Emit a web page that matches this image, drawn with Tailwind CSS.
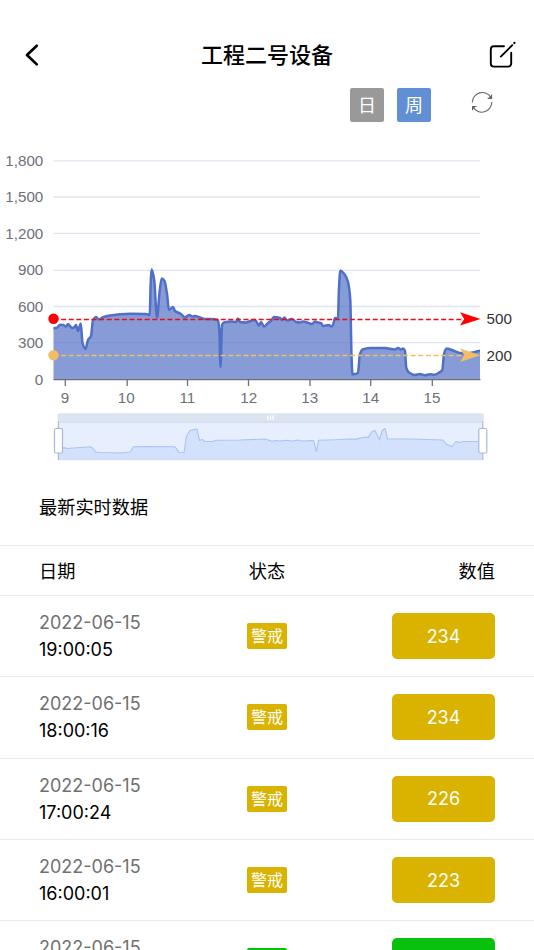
<!DOCTYPE html>
<html lang="zh-CN">
<head>
  <meta charset="UTF-8" />
  <meta name="viewport" content="width=device-width, initial-scale=1.0" />
  <title>工程二号设备</title>
  <script src="https://cdn.jsdelivr.net/npm/@tailwindcss/browser@4"></script>
</head>
<body class="h-[950px] overflow-hidden bg-white text-black font-[Inter,'Noto_Sans_CJK_SC',sans-serif]">
  <header class="flex h-[88px] items-center justify-between pt-[22px] pr-[17px] pl-[17px]">
    <svg class="h-7 w-7" viewBox="17 41 28 28" fill="none" stroke="#000" stroke-width="2.7" stroke-linecap="round" stroke-linejoin="round">
      <path d="M36.8 45.8 27 55l9.8 9.4" />
    </svg>
    <h1 class="text-[22px] leading-[32px] font-medium">工程二号设备</h1>
    <svg class="h-7 w-7" viewBox="489 41 28 28" fill="none" stroke="#000" stroke-width="1.9" stroke-linecap="round">
      <path d="M504 46.2h-10.200a3 3 0 0 0-3 3v14.400a3 3 0 0 0 3 3h14.400a3 3 0 0 0 3-3v-10.800" />
      <path d="M500.800 56.600 512.300 45.200" />
      <path d="M514.300 43l.2-.2" stroke-width="2.200" />
    </svg>
  </header>

  <div class="flex h-[52px] items-start justify-end pr-[41px] text-[18px] text-white">
    <button class="flex h-[34px] w-[34px] items-center justify-center rounded-[2px] bg-[#999]">日</button>
    <button class="ml-[13px] flex h-[34px] w-[34px] items-center justify-center rounded-[2px] bg-[#618fd6]">周</button>
    <svg class="mt-[2px] ml-[40px] h-[24px] w-[22px]" viewBox="471 90 22 24" fill="none" stroke="#666" stroke-width="1.100">
      <path d="M472.300 102.600a10 10 0 0 1 18.600-5.200M491.800 102.100a10 10 0 0 1-18.600 5.200" />
      <path d="M491.500 94.600v3.700h-3.900M472.600 110.300v-3.800h3.800" />
      <path d="M491.500 96v2.300h-2.400zM472.600 108.800v-2.300h2.400z" fill="#666" />
    </svg>
  </div>

  <svg class="block h-[330px] w-full" viewBox="0 140 534 330" font-family="Liberation Sans, sans-serif" font-size="15.2">
    <!-- grid -->
    <path d="M53.500 160.800H480M53.500 197H480M53.500 233.300H480M53.500 270.300H480M53.500 306.500H480M53.500 342.700H480" stroke="#e0e6f1" stroke-width="1.300" />
    <g fill="#6e7079" text-anchor="end">
      <text x="43.300" y="166">1,800</text>
      <text x="43.300" y="202.400">1,500</text>
      <text x="43.300" y="238.800">1,200</text>
      <text x="43.300" y="275.400">900</text>
      <text x="43.300" y="311.900">600</text>
      <text x="43.300" y="348.400">300</text>
      <text x="43.300" y="384.900">0</text>
    </g>

    <path id="area" fill="#5470c6" fill-opacity=".7" />
    <path d="M53.500 379.700H480.500M65.300 380v6M127.200 380v6M187.500 380v6M248.500 380v6M310 380v6M370.700 380v6M432.300 380v6" fill="none" stroke="#6e7079" stroke-width="1.300" />
    <path id="line" fill="none" stroke="#5070c8" stroke-width="2.500" stroke-linejoin="round" />
    <g fill="#6e7079" text-anchor="middle">
      <text x="65" y="403">9</text>
      <text x="126.200" y="403">10</text>
      <text x="187.300" y="403">11</text>
      <text x="248.800" y="403">12</text>
      <text x="309.700" y="403">13</text>
      <text x="370.800" y="403">14</text>
      <text x="432" y="403">15</text>
    </g>

    <!-- alarm thresholds -->
    <path d="M53.500 319.500H462" stroke="#f00a14" stroke-width="1.300" stroke-dasharray="5 2.600" />
    <circle cx="53.500" cy="318.800" r="5.200" fill="#f00" />
    <path d="M480.500 318.900 460 312.200l4.200 6.700-4.200 6.700z" fill="#f00" />
    <path d="M53.500 355.500H462" stroke="#f3bd63" stroke-width="1.300" stroke-dasharray="5 2.600" />
    <circle cx="53.500" cy="355.200" r="5.200" fill="#f3bd63" />
    <path d="M480.500 355.300 460 348.600l4.200 6.700-4.200 6.700z" fill="#f3bd63" />
    <text x="486.500" y="324.400" fill="#333">500</text>
    <text x="486.500" y="360.800" fill="#333">200</text>

    <!-- zoom slider -->
    <path d="M57.500 422v-6.500a2.200 2.200 0 0 1 2.200-2.200h422a2.200 2.200 0 0 1 2.200 2.200v6.500z" fill="#dde4f1" />
    <path d="M58.300 422H483V460H58.300z" fill="#e7eefe" />
    <path id="miniArea" fill="#d4e1fd" />
    <path id="miniLine" fill="none" stroke="#a9c3f5" stroke-width="1.100" stroke-linejoin="round" />
    <path d="M58.300 422.300H483M58.300 459.700H483" stroke="#d2dbee" />
    <path d="M267.900 415.600v4.200M270.500 415.600v4.200M273.200 415.600v4.200" stroke="#fff" stroke-width="1.500" />
    <path d="M58.400 421.500V460M482.800 421.500V460" stroke="#acb8d1" stroke-width="1.200" />
    <rect x="54.500" y="428.500" width="8" height="24.500" rx="1.500" fill="#fff" stroke="#acb8d1" stroke-width="1.200" />
    <rect x="478.800" y="428.500" width="8" height="24.500" rx="1.500" fill="#fff" stroke="#acb8d1" stroke-width="1.200" />
  </svg>

  <h2 class="flex h-[75px] items-center pt-px pl-[39px] text-[18.200px]">最新实时数据</h2>
  <div class="grid h-[51px] grid-cols-3 items-center border-y border-[#e9e9e9] px-[39px] pt-[2px] text-[18.200px]">
    <span>日期</span>
    <span class="text-center">状态</span>
    <span class="text-right">数值</span>
  </div>

  <div class="text-[18px]">
    <div class="grid h-[81.300px] grid-cols-3 items-center border-b border-[#e9e9e9] px-[39px]">
      <div class="leading-[27px]"><p class="text-[#707070]">2022-06-15</p><p>19:00:05</p></div>
      <span class="flex h-[26px] w-[39.500px] items-center justify-center justify-self-center rounded-[2px] bg-[#d9b300] text-[16px] text-white">警戒</span>
      <span class="flex h-[46px] w-[103px] items-center justify-center justify-self-end rounded-[5px] bg-[#d9b300] text-white">234</span>
    </div>
    <div class="grid h-[81.300px] grid-cols-3 items-center border-b border-[#e9e9e9] px-[39px]">
      <div class="leading-[27px]"><p class="text-[#707070]">2022-06-15</p><p>18:00:16</p></div>
      <span class="flex h-[26px] w-[39.500px] items-center justify-center justify-self-center rounded-[2px] bg-[#d9b300] text-[16px] text-white">警戒</span>
      <span class="flex h-[46px] w-[103px] items-center justify-center justify-self-end rounded-[5px] bg-[#d9b300] text-white">234</span>
    </div>
    <div class="grid h-[81.300px] grid-cols-3 items-center border-b border-[#e9e9e9] px-[39px]">
      <div class="leading-[27px]"><p class="text-[#707070]">2022-06-15</p><p>17:00:24</p></div>
      <span class="flex h-[26px] w-[39.500px] items-center justify-center justify-self-center rounded-[2px] bg-[#d9b300] text-[16px] text-white">警戒</span>
      <span class="flex h-[46px] w-[103px] items-center justify-center justify-self-end rounded-[5px] bg-[#d9b300] text-white">226</span>
    </div>
    <div class="grid h-[81.300px] grid-cols-3 items-center border-b border-[#e9e9e9] px-[39px]">
      <div class="leading-[27px]"><p class="text-[#707070]">2022-06-15</p><p>16:00:01</p></div>
      <span class="flex h-[26px] w-[39.500px] items-center justify-center justify-self-center rounded-[2px] bg-[#d9b300] text-[16px] text-white">警戒</span>
      <span class="flex h-[46px] w-[103px] items-center justify-center justify-self-end rounded-[5px] bg-[#d9b300] text-white">223</span>
    </div>
    <!-- next row, only its top shows above the fold -->
    <div class="grid h-[29.800px] grid-cols-3 items-start overflow-hidden px-[39px]">
      <p class="pt-[13px] leading-[27px] text-[#707070]">2022-06-15</p>
      <span class="mt-[27px] h-[26px] w-[39.500px] justify-self-center rounded-[2px] bg-[#07c10c]"></span>
      <span class="mt-[17px] h-[46px] w-[103px] justify-self-end rounded-[5px] bg-[#07c10c]"></span>
    </div>
  </div>

  <script>
    const serie = [[53.5,328],[56.5,328],[60,324.8],[63,325],[66,326.5],[68,324],[72,328],[74,327.5],[76,325],[78,331],[80.8,323.5],[82.5,343],[85.5,349],[88,340],[91,336],[93,320],[96,317],[99,319.5],[103,317.2],[110,315.5],[118,314.5],[130,313.8],[146,314],[149.8,315],[150.6,285],[151.8,269.5],[154.2,280],[157,317.5],[159.8,290],[161.8,278.5],[164.5,281],[167,294],[169,310],[173,307],[175,311],[181,314],[185,317.5],[189,315],[193,316.5],[195,316],[200,317.5],[205,319],[210,319],[218,320],[219.3,330],[220.5,367],[222,325],[224,322.5],[231,321.5],[236,322],[238,318.5],[240,322],[246,322.5],[254,320],[256,321],[259,325.5],[261,322],[264,326.5],[268,323],[271,321],[274,317],[280,318],[282,320],[284.5,317.5],[287,320.5],[292,319],[296,322],[300,322.5],[303,321.5],[307,322.5],[312,324],[315,321.5],[318,322.5],[321,323],[323,326],[326,325.5],[329,325],[331,326.5],[333,325],[335,318],[338,318.5],[338.9,290],[340.3,270.8],[345,275],[348,282],[350.3,300],[351.5,355],[352.5,374.5],[355,374],[358,373],[359.8,355],[362.5,349.5],[370,348],[385,348],[395,349.5],[398,348],[401,349.5],[403,348.5],[405,351],[406.3,368],[409,372.5],[415,375],[420,374],[425,375.3],[430,374.3],[434,374.8],[440,372],[442.3,370],[444,354],[446.5,348.5],[452,350],[460,353],[466,353.5],[475,352],[480,350.8]];
    const mini = [[58,448],[64,447.6],[67,448.5],[90,446.8],[92.500,448],[96,452],[100,452.5],[120,453],[130,452],[133.5,446.8],[147,446.6],[175,446.8],[179,452.2],[184,452.5],[186.5,436],[190,430.5],[197,429],[199.5,440.5],[202,439.5],[205,441.5],[212,441.5],[217,440.3],[240,440],[265,439],[272,441.2],[276,440.5],[280,441],[285,440.3],[293,441],[298,440],[302,441],[313.5,440.5],[316.5,451.5],[318.5,440.3],[335,439.8],[350,439],[355,439.4],[365,437],[368,437.6],[372,431.5],[375,430.5],[379.5,440],[382,431],[385,428.5],[387.5,439],[410,439],[443,440],[446,444],[452,446.5],[456,441.5],[459,442.5],[463,441.5],[482,441.5]];

    // monotone curve, never overshoots the samples
    function curvePath(p) {
      const d = p.slice(1).map((q, i) => (q[1] - p[i][1]) / (q[0] - p[i][0]));
      const m = p.map((q, i) => {
        const a = d[i - 1], b = d[i];
        return a * b > 0 ? 2 * a * b / (a + b) : 0;
      });
      let s = 'M' + p[0];
      for (let i = 1; i < p.length; i++) {
        const h = (p[i][0] - p[i - 1][0]) / 3;
        s += 'C' + [p[i - 1][0] + h, p[i - 1][1] + m[i - 1] * h, p[i][0] - h, p[i][1] - m[i] * h, p[i][0], p[i][1]];
      }
      return s;
    }

    const line = curvePath(serie);
    document.getElementById('line').setAttribute('d', line);
    document.getElementById('area').setAttribute('d', line + 'V379.5H53.5Z');
    const base = 'M' + mini.join('L');
    document.getElementById('miniLine').setAttribute('d', base);
    document.getElementById('miniArea').setAttribute('d', base + 'V459.5H58Z');
  </script>
</body>
</html>
